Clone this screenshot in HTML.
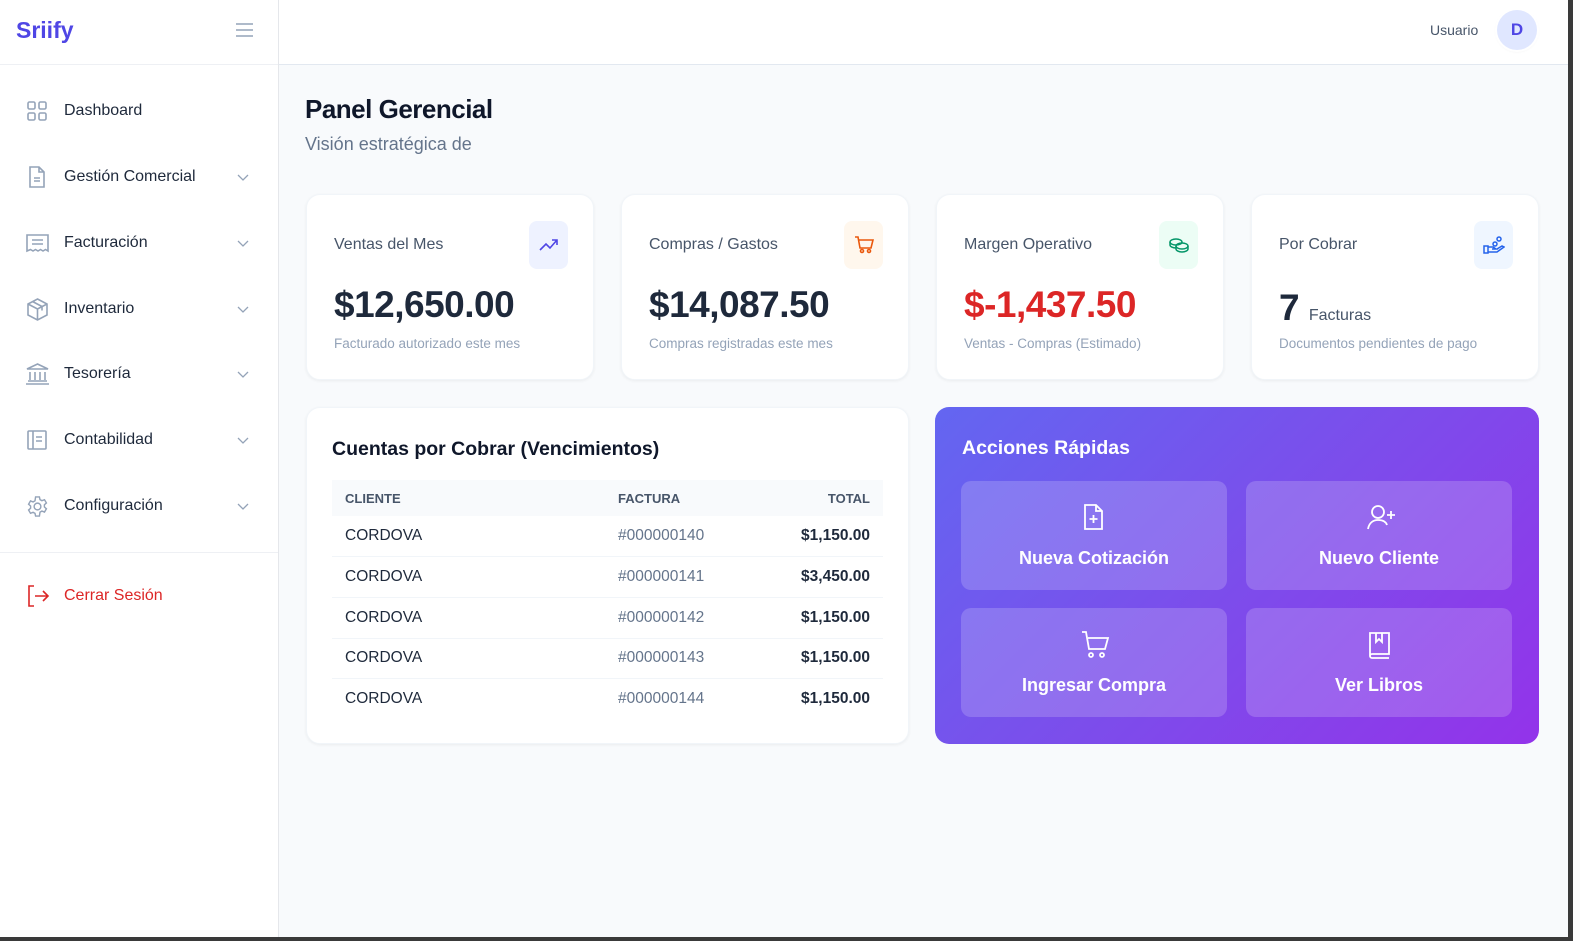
<!DOCTYPE html>
<html><head><meta charset="utf-8"><style>
*{box-sizing:border-box;margin:0;padding:0}
body{width:1573px;height:941px;background:#3a3a3a;font-family:"Liberation Sans",sans-serif;overflow:hidden;position:relative}
#app{position:absolute;left:0;top:0;width:1568px;height:937px;background:#f8fafc;overflow:hidden}
.abs{position:absolute}
#side{left:0;top:0;width:279px;height:937px;background:#fff;border-right:1px solid #e5e7eb}
#top{left:279px;top:0;right:0;height:65px;background:#fff;border-bottom:1px solid #e2e8f0}
.logo{left:16px;top:17px;font-size:23px;font-weight:bold;color:#4f46e5}
.nav{left:0;width:278px;height:40px;display:flex;align-items:center;font-size:16px;color:#1e293b}
.nav svg.ic{position:absolute;left:26px}
.nav span{position:absolute;left:64px}
.nav .chev{position:absolute;left:236px}
.card{background:#fff;border-radius:14px;box-shadow:0 1px 3px rgba(0,0,0,.06);border:1px solid #f1f5f9}
.sc .lbl{position:absolute;left:27px;top:41px;font-size:16px;color:#475569}
.sc .val{position:absolute;left:27px;top:89px;font-size:37px;font-weight:bold;color:#1e293b;letter-spacing:-0.5px}
.sc .sub{position:absolute;left:27px;top:141px;font-size:13.5px;color:#94a3b8}
.sc .ib{position:absolute;left:222px;top:26px;width:39px;height:48px;border-radius:8px;display:flex;align-items:center;justify-content:center}
table{border-collapse:collapse;width:551px}
th{font-size:13px;color:#475569;font-weight:bold;height:36px;background:#f8fafc;text-align:left;padding:0 13px}
td{font-size:15.5px;height:40.7px;border-bottom:1px solid #f1f5f9;padding:0 13px;color:#1e293b}
td.f{color:#64748b}td.t{text-align:right;font-weight:bold}th.t{text-align:right}
.tile{position:absolute;width:266px;height:109px;border-radius:10px;background:rgba(255,255,255,.18);color:#fff;font-size:18px;font-weight:bold;text-align:center}
.tile svg{position:absolute;left:120px;top:22px}
.tile div{position:absolute;left:0;right:0;top:67px}
</style></head><body><div id="app">
<div id="side" class="abs">
<div class="abs logo">Sriify</div>
<svg class="abs" style="left:235px;top:22px" width="19" height="16" viewBox="0 0 19 16" fill="none" stroke="#94a3b8" stroke-width="1.6"><path d="M1 2h17M1 8h17M1 14h17"/></svg>
<div class="abs" style="left:0;top:64px;width:278px;border-top:1px solid #eef0f4"></div>
<div class="abs nav" style="top:91px"><svg class="ic" width="22" height="22" viewBox="0 0 22 22" fill="none" stroke="#94a3b8" stroke-width="1.6"><rect x="2" y="2" width="7" height="7" rx="1.5"/><rect x="13" y="2" width="7" height="7" rx="1.5"/><rect x="2" y="13" width="7" height="7" rx="1.5"/><rect x="13" y="13" width="7" height="7" rx="1.5"/></svg><span>Dashboard</span></div>
<div class="abs nav" style="top:157px"><svg class="ic" width="22" height="22" viewBox="0 0 22 22" fill="none" stroke="#94a3b8" stroke-width="1.6"><path d="M4 1h9l5 5v15H4z M13 1v5h5 M8 12h6M8 15h6"/></svg><span>Gestión Comercial</span><svg class="chev" width="14" height="14" viewBox="0 0 14 14" fill="none" stroke="#94a3b8" stroke-width="1.3"><path d="M2 5l5 5 5-5"/></svg></div>
<div class="abs nav" style="top:223px"><svg class="ic" width="23" height="22" viewBox="0 0 23 22" fill="none" stroke="#94a3b8" stroke-width="1.6"><path d="M1 3h21v16l-2.5-1.5-2.5 1.5-2.5-1.5-2.5 1.5-2.5-1.5-2.5 1.5-2.5-1.5L1 19z M6 8h11M6 12h11"/></svg><span>Facturación</span><svg class="chev" width="14" height="14" viewBox="0 0 14 14" fill="none" stroke="#94a3b8" stroke-width="1.3"><path d="M2 5l5 5 5-5"/></svg></div>
<div class="abs nav" style="top:289px"><svg class="ic" width="23" height="23" viewBox="0 0 23 23" fill="none" stroke="#94a3b8" stroke-width="1.6"><path d="M11.5 1L21 6v11l-9.5 5L2 17V6z M2 6l9.5 5L21 6 M11.5 11v11 M6.5 3.5l9.5 5v4"/></svg><span>Inventario</span><svg class="chev" width="14" height="14" viewBox="0 0 14 14" fill="none" stroke="#94a3b8" stroke-width="1.3"><path d="M2 5l5 5 5-5"/></svg></div>
<div class="abs nav" style="top:354px"><svg class="ic" style="left:25px" width="25" height="22" viewBox="0 0 25 22" fill="none" stroke="#94a3b8" stroke-width="1.6"><path d="M12.5 1L23 6H2z M5 9v8M10 9v8M15 9v8M20 9v8 M3 18h19 M1 21h23"/></svg><span>Tesorería</span><svg class="chev" width="14" height="14" viewBox="0 0 14 14" fill="none" stroke="#94a3b8" stroke-width="1.3"><path d="M2 5l5 5 5-5"/></svg></div>
<div class="abs nav" style="top:420px"><svg class="ic" width="22" height="22" viewBox="0 0 22 22" fill="none" stroke="#94a3b8" stroke-width="1.6"><rect x="2" y="2" width="18" height="18" rx="1"/><path d="M7 2v18M10 8h6M10 12h6"/></svg><span>Contabilidad</span><svg class="chev" width="14" height="14" viewBox="0 0 14 14" fill="none" stroke="#94a3b8" stroke-width="1.3"><path d="M2 5l5 5 5-5"/></svg></div>
<div class="abs nav" style="top:486px"><svg class="ic" width="23" height="23" viewBox="0 0 24 24" fill="none" stroke="#94a3b8" stroke-width="1.5"><path d="M10 2h4l.6 2.8 2 1.1 2.7-1 2 3.4-2.1 1.9v2.3l2.1 1.9-2 3.4-2.7-1-2 1.1L14 22h-4l-.6-2.8-2-1.1-2.7 1-2-3.4 2.1-1.9v-2.3L2.7 9.6l2-3.4 2.7 1 2-1.1z"/><circle cx="12" cy="12" r="3.5"/></svg><span>Configuración</span><svg class="chev" width="14" height="14" viewBox="0 0 14 14" fill="none" stroke="#94a3b8" stroke-width="1.3"><path d="M2 5l5 5 5-5"/></svg></div>
<div class="abs" style="left:0;top:552px;width:278px;border-top:1px solid #eef0f4"></div>
<div class="abs nav" style="top:576px;color:#dc2626"><svg class="ic" width="24" height="22" viewBox="0 0 24 22" fill="none" stroke="#dc2626" stroke-width="1.6"><path d="M8 1H3v20h5 M9 11h13 M17 6l5 5-5 5"/></svg><span>Cerrar Sesión</span></div>
</div>
<div id="top" class="abs">
<div class="abs" style="left:1151px;top:22px;font-size:14px;color:#475569">Usuario</div>
<div class="abs" style="left:1218px;top:10px;width:40px;height:40px;border-radius:50%;background:#e0e7ff;color:#4f46e5;font-weight:bold;font-size:17px;display:flex;align-items:center;justify-content:center;box-shadow:0 0 0 2px #fff,0 1px 3px rgba(0,0,0,.1)">D</div>
</div>
<div class="abs" style="left:305px;top:94px;font-size:26px;font-weight:bold;color:#0f172a;letter-spacing:-0.5px">Panel Gerencial</div>
<div class="abs" style="left:305px;top:134px;font-size:18px;color:#64748b">Visión estratégica de</div>

<div class="abs card sc" style="left:306px;top:194px;width:288px;height:186px"><div class="lbl">Ventas del Mes</div><div class="ib" style="background:#eef2ff"><svg width="20" height="14" viewBox="0 0 20 14" fill="none" stroke="#4f46e5" stroke-width="1.6"><path d="M1 12l6-6 4 4 7-8 M13 2h5v5"/></svg></div><div class="val">$12,650.00</div><div class="sub">Facturado autorizado este mes</div></div>
<div class="abs card sc" style="left:621px;top:194px;width:288px;height:186px"><div class="lbl">Compras / Gastos</div><div class="ib" style="background:#fff7ed"><svg width="20" height="18" viewBox="0 0 20 18" fill="none" stroke="#ea580c" stroke-width="1.6"><path d="M1 1h3l2 11h11l2-8H5"/><circle cx="8" cy="15" r="1.5"/><circle cx="15" cy="15" r="1.5"/></svg></div><div class="val">$14,087.50</div><div class="sub">Compras registradas este mes</div></div>
<div class="abs card sc" style="left:936px;top:194px;width:288px;height:186px"><div class="lbl">Margen Operativo</div><div class="ib" style="background:#ecfdf5"><svg width="22" height="16" viewBox="0 0 22 16" fill="none" stroke="#059669" stroke-width="1.5"><ellipse cx="8" cy="5" rx="6" ry="3"/><path d="M2 5v3c0 1.6 2.7 3 6 3"/><ellipse cx="14" cy="9" rx="6" ry="3"/><path d="M8 9v3c0 1.6 2.7 3 6 3s6-1.4 6-3V9"/></svg></div><div class="val" style="color:#dc2626">$-1,437.50</div><div class="sub">Ventas - Compras (Estimado)</div></div>
<div class="abs card sc" style="left:1251px;top:194px;width:288px;height:186px"><div class="lbl">Por Cobrar</div><div class="ib" style="background:#eff6ff"><svg width="22" height="18" viewBox="0 0 22 18" fill="none" stroke="#2563eb" stroke-width="1.5"><circle cx="16" cy="3" r="2"/><circle cx="12" cy="8" r="2"/><path d="M1 10h4v7H1z M5 11h5l3 2h-4 M5 16h9l7-5-2-1-5 3"/></svg></div><div class="val" style="top:92px">7 <span style="font-size:16px;font-weight:normal;color:#475569;letter-spacing:0">Facturas</span></div><div class="sub">Documentos pendientes de pago</div></div>

<div class="abs card" style="left:306px;top:407px;width:603px;height:337px">
<div class="abs" style="left:25px;top:30px;font-size:19.5px;font-weight:bold;color:#0f172a">Cuentas por Cobrar (Vencimientos)</div>
<table class="abs" style="left:25px;top:72px"><tr><th style="width:273px">CLIENTE</th><th style="width:150px">FACTURA</th><th class="t">TOTAL</th></tr>
<tr><td>CORDOVA</td><td class="f">#000000140</td><td class="t">$1,150.00</td></tr>
<tr><td>CORDOVA</td><td class="f">#000000141</td><td class="t">$3,450.00</td></tr>
<tr><td>CORDOVA</td><td class="f">#000000142</td><td class="t">$1,150.00</td></tr>
<tr><td>CORDOVA</td><td class="f">#000000143</td><td class="t">$1,150.00</td></tr>
<tr><td style="border:0">CORDOVA</td><td class="f" style="border:0">#000000144</td><td class="t" style="border:0">$1,150.00</td></tr></table>
</div>

<div class="abs" style="left:935px;top:407px;width:604px;height:337px;border-radius:14px;background:linear-gradient(135deg,#6366f1,#7c4deb 50%,#9333ea)">
<div class="abs" style="left:27px;top:30px;font-size:19.5px;font-weight:bold;color:#fff">Acciones Rápidas</div>
<div class="tile" style="left:26px;top:74px"><svg width="26" height="28" viewBox="0 0 26 28" fill="none" stroke="#fff" stroke-width="1.8"><path d="M4 2h11l6 6v18H4z M15 2v6h6 M12.5 12v8M8.5 16h8"/></svg><div>Nueva Cotización</div></div>
<div class="tile" style="left:311px;top:74px"><svg width="32" height="28" viewBox="0 0 32 28" fill="none" stroke="#fff" stroke-width="1.8"><circle cx="12" cy="9" r="6"/><path d="M2 26c1-6 5-9 10-9s8 2 9 5 M25 8v8M21 12h8"/></svg><div>Nuevo Cliente</div></div>
<div class="tile" style="left:26px;top:201px"><svg width="30" height="30" viewBox="0 0 30 30" fill="none" stroke="#fff" stroke-width="1.8"><path d="M1 2h4l3 17h16l3-11H7"/><circle cx="10" cy="25" r="2"/><circle cx="21" cy="25" r="2"/></svg><div>Ingresar Compra</div></div>
<div class="tile" style="left:311px;top:201px"><svg width="26" height="30" viewBox="0 0 26 30" fill="none" stroke="#fff" stroke-width="1.8"><path d="M4 3h19v21H6a2 2 0 0 0-2 2V3z M4 26a2 2 0 0 0 2 2h17 M10 3v9l3-3 3 3V3"/></svg><div>Ver Libros</div></div>
</div>
</div></body></html>
